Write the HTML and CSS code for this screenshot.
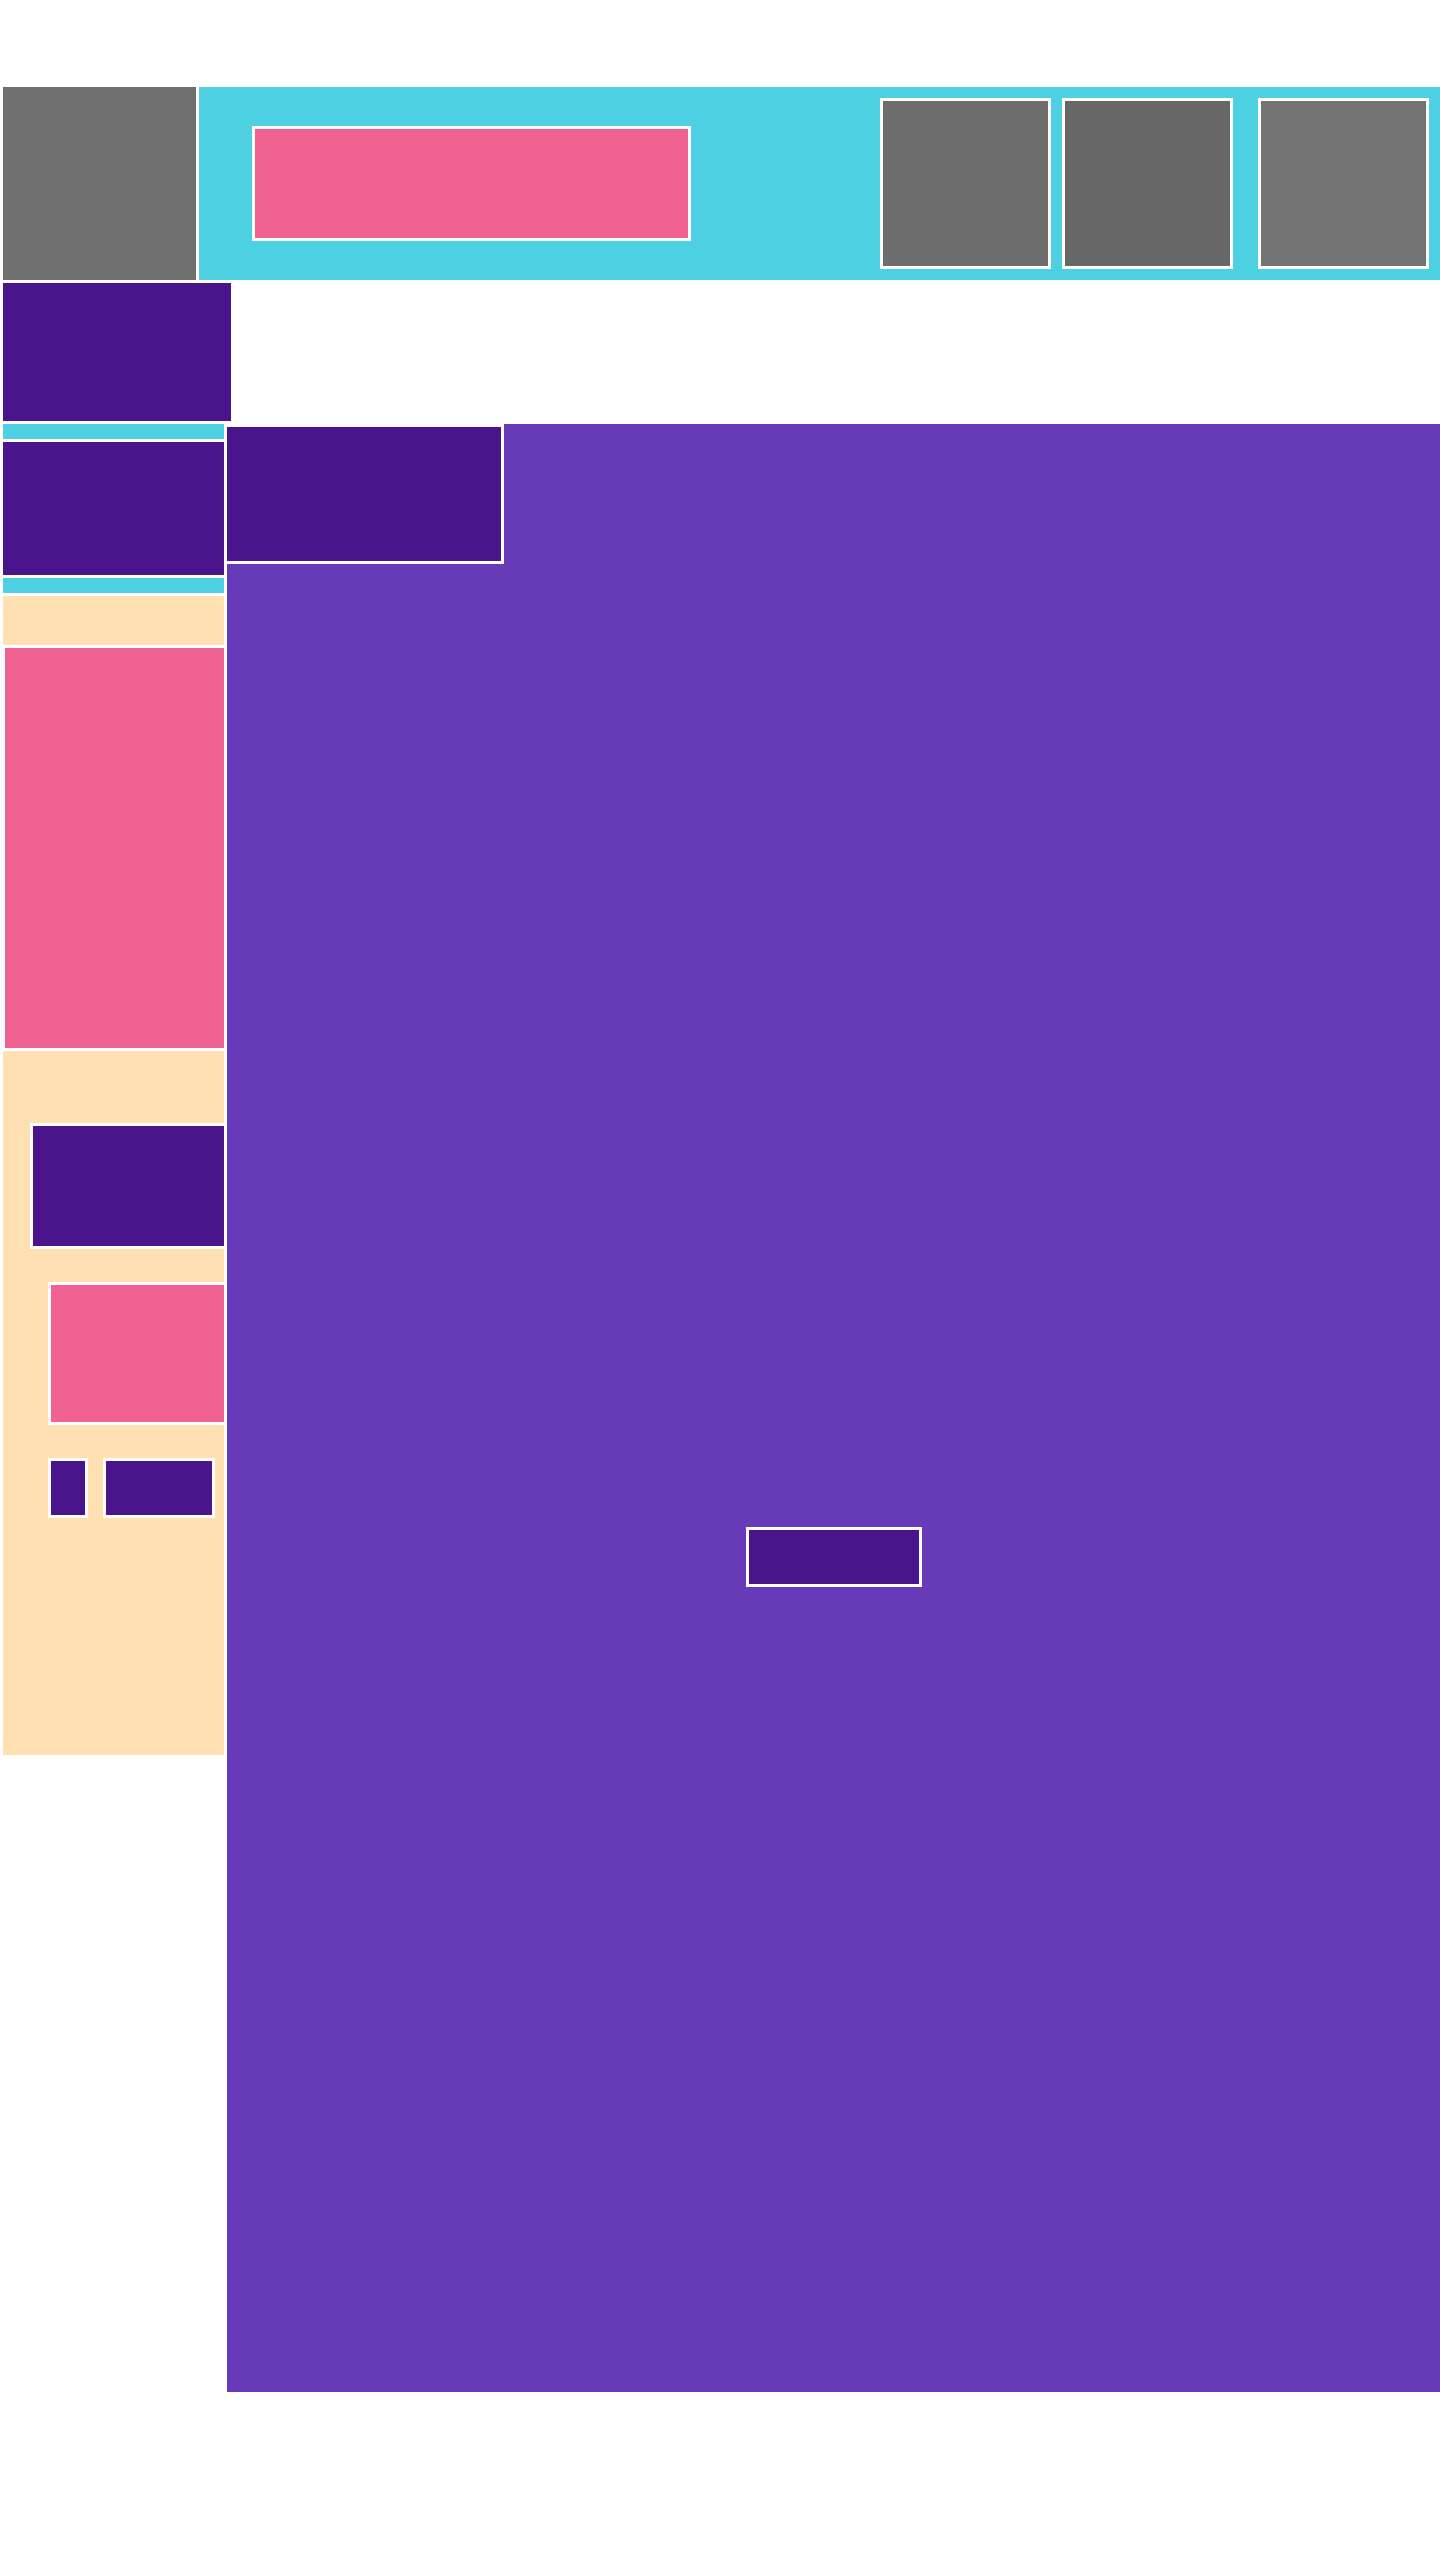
FILE: index.html
```html
<!DOCTYPE html>
<html lang="en">
<head>
  <meta charset="UTF-8" />
  <meta name="viewport" content="width=device-width, initial-scale=1.0" />
  <title>Layout</title>
  <link rel="stylesheet" href="styles.css">
</head>
<body>
  <div class="page">
    <header class="topbar">
      <div class="logo"></div>
      <div class="bar">
        <div class="search"></div>
        <div class="tools">
          <div class="tool tool-a"></div>
          <div class="tool tool-b"></div>
          <div class="tool tool-c"></div>
        </div>
      </div>
    </header>

    <div class="banner"></div>

    <div class="layout">
      <aside class="side">
        <div class="strip"></div>
        <div class="side-block"></div>
        <div class="strip"></div>
        <div class="panel">
          <div class="panel-pink"></div>
          <div class="panel-dark"></div>
          <div class="panel-card"></div>
          <div class="panel-row">
            <div class="chip small"></div>
            <div class="chip wide"></div>
          </div>
        </div>
      </aside>

      <main class="main">
        <div class="main-title"></div>
        <div class="main-btn"></div>
      </main>
    </div>
  </div>
</body>
</html>
```

FILE: styles.css
```css
body {
  margin: 0;
  background: #fff;
  font-family: "Liberation Sans", Arial, sans-serif;
}
.page {
  padding: 87px 0 0 3px;
}

/* header */
.topbar {
  display: flex;
  height: 193px;
  gap: 3px;
}
.logo {
  width: 193px;
  background: #707070;
}
.bar {
  flex: 1;
  background: #4dd0e1;
  display: flex;
  align-items: center;
  padding-left: 53px;
  padding-right: 11px;
}
.search {
  width: 433px;
  height: 109px;
  background: #f06292;
  border: 3px solid #fff;
}
.tools {
  margin-left: auto;
  display: flex;
  gap: 11px;
}
.tool {
  width: 165px;
  height: 165px;
  border: 3px solid #fff;
}
.tool-a { background: #6d6d6d; }
.tool-b { background: #676767; }
.tool-c { background: #737373; margin-left: 14px; }

.banner {
  width: 228px;
  height: 138px;
  margin-top: 3px;
  background: #4a148c;
}

/* body columns */
.layout {
  display: flex;
  gap: 3px;
  margin-top: 3px;
  align-items: flex-start;
}
.side {
  width: 221px;
  display: flex;
  flex-direction: column;
  gap: 3px;
}
.strip {
  height: 15px;
  background: #4dd0e1;
}
.side-block {
  height: 133px;
  background: #4a148c;
}
.panel {
  height: 1159px;
  background: #ffe0b2;
  padding-top: 49px;
  box-sizing: border-box;
}
.panel-pink {
  height: 400px;
  background: #f06292;
  border-top: 3px solid #fff;
  border-left: 2px solid #fff;
  border-bottom: 3px solid #fff;
}
.panel-dark {
  margin: 72px 0 0 27px;
  height: 120px;
  background: #4a148c;
  border: 3px solid #fff;
  border-right: 0;
}
.panel-card {
  margin: 33px 0 0 45px;
  height: 137px;
  background: #f06292;
  border: 3px solid #fff;
  border-right: 0;
}
.panel-row {
  display: flex;
  margin: 33px 0 0 45px;
  gap: 15px;
}
.chip {
  height: 54px;
  background: #4a148c;
  border: 3px solid #fff;
}
.chip.small { width: 34px; }
.chip.wide { width: 106px; }

.main {
  flex: 1;
  height: 1968px;
  background: #673ab7;
}
.main-title {
  width: 274px;
  height: 134px;
  margin-left: -3px;
  background: #4a148c;
  border: 3px solid #fff;
}
.main-btn {
  width: 170px;
  height: 54px;
  margin: 963px auto 0;
  background: #4a148c;
  border: 3px solid #fff;
}
```
